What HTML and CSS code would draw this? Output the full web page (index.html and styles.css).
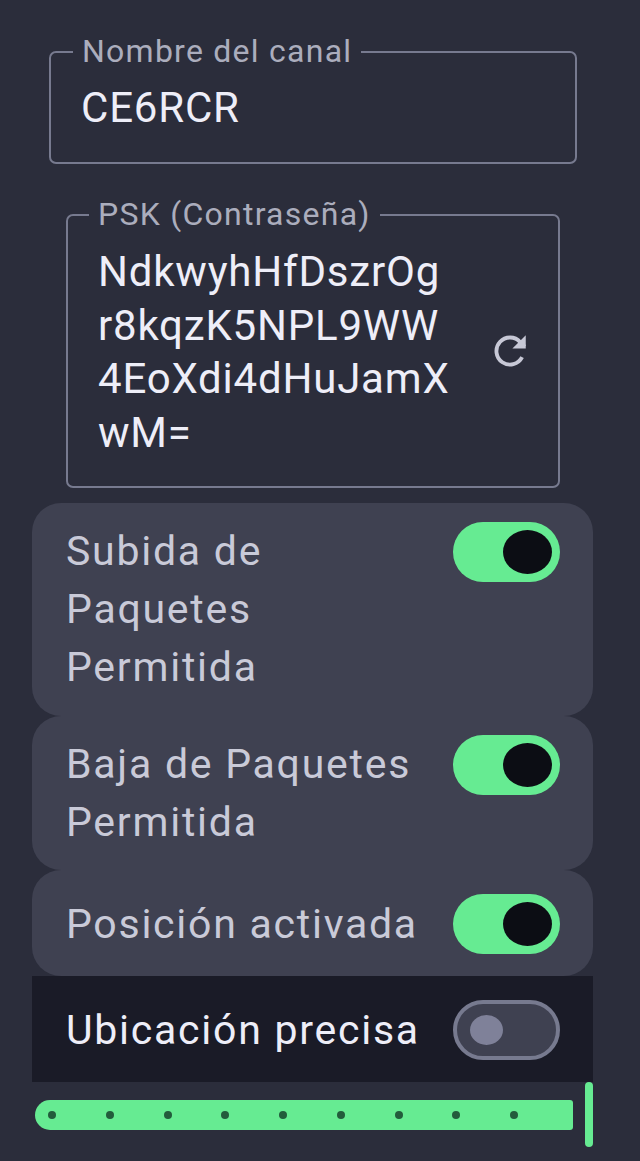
FILE: index.html
```html
<!DOCTYPE html>
<html lang="es">
<head>
    <meta charset="UTF-8">
    <meta name="viewport" content="width=device-width, initial-scale=1.0">
    <title>Canal</title>
    <link rel="stylesheet" href="styles.css">
</head>
<body>
    <div class="container">
        <fieldset class="field field-name">
            <legend>Nombre del canal</legend>
            <div class="field-value">CE6RCR</div>
        </fieldset>

        <fieldset class="field field-psk">
            <legend>PSK (Contraseña)</legend>
            <div class="psk-row">
                <div class="field-value psk-value">NdkwyhHfDszrOg<br>r8kqzK5NPL9WW<br>4EoXdi4dHuJamX<br>wM=</div>
                <svg class="refresh" viewBox="0 0 24 24" width="44" height="44" aria-hidden="true">
                    <path d="M18.6 15.4A7.4 7.4 0 1 1 17.6 7.2L20 9.6" fill="none" stroke="currentColor" stroke-width="2.1"/>
                    <path d="M20.6 3.4V10.7H13.3Z" fill="currentColor"/>
                </svg>
            </div>
        </fieldset>

        <div class="setting setting-three">
            <span class="setting-label">Subida de<br>Paquetes<br>Permitida</span>
            <span class="switch on"></span>
        </div>
        <div class="setting setting-two">
            <span class="setting-label">Baja de Paquetes<br>Permitida</span>
            <span class="switch on"></span>
        </div>
        <div class="setting setting-one">
            <span class="setting-label">Posición activada</span>
            <span class="switch on"></span>
        </div>
        <div class="setting setting-one selected">
            <span class="setting-label">Ubicación precisa</span>
            <span class="switch off"></span>
        </div>

        <div class="slider">
            <div class="slider-track">
                <i></i><i></i><i></i><i></i><i></i><i></i><i></i><i></i><i></i>
            </div>
            <div class="slider-thumb"></div>
        </div>
    </div>
</body>
</html>
```

FILE: styles.css
```css
* {
    box-sizing: border-box;
}
html, body {
    margin: 0;
    padding: 0;
}
body {
    width: 640px;
    height: 1161px;
    overflow: hidden;
    background-color: #2b2d3b;
    font-family: Roboto, "Noto Sans", sans-serif;
    color: #eeeef8;
}
.container {
    padding: 32px 47px 0 32px;
}
.field {
    margin: 0;
    padding: 0 22px 0 30px;
    border: 2px solid #777a8f;
    border-radius: 7px;
    min-width: 0;
}
.field legend {
    margin-left: -8px;
    padding: 0 9px 2px 9px;
    font-size: 32px;
    line-height: 38px;
    letter-spacing: 1.25px;
    color: #abadbd;
}
.field-name {
    margin: 0 16px 0 17px;
    height: 132px;
}
.field-psk {
    margin: 31px 33px 15px 34px;
    height: 293px;
}
.field-psk legend {
    margin-left: -9px;
}
.field-value {
    font-size: 42px;
    line-height: 54px;
    letter-spacing: 0.8px;
    padding-top: 9px;
}
.psk-row {
    display: flex;
    align-items: center;
    justify-content: space-between;
}
.psk-value {
    padding-top: 10px;
    line-height: 53.5px;
}
.refresh {
    color: #c7c8d6;
    margin-right: 4px;
    margin-top: 7px;
}
.setting {
    display: flex;
    justify-content: space-between;
    align-items: flex-start;
    padding: 19px 33px 0 34px;
    background-color: #3f4151;
    border-radius: 29px;
}
.setting-three {
    height: 213px;
}
.setting-two {
    height: 154px;
}
.setting-one {
    height: 106px;
    padding-top: 1px;
    align-items: center;
}
.setting-label {
    font-size: 41px;
    line-height: 58px;
    letter-spacing: 1.75px;
    color: #c9cad8;
}
.selected {
    background-color: #1a1b27;
    border-radius: 0;
}
.selected .setting-label {
    color: #eeeef8;
}
.switch {
    position: relative;
    flex: none;
    width: 107px;
    height: 60px;
    border-radius: 30px;
}
.switch::after {
    content: "";
    position: absolute;
    border-radius: 50%;
}
.switch.on {
    background-color: #66eb92;
}
.switch.on::after {
    top: 8px;
    left: 50px;
    width: 49px;
    height: 44px;
    background-color: #0c0d14;
}
.switch.off {
    background-color: #3f4151;
    border: 4px solid #777a8f;
}
.switch.off::after {
    top: 11px;
    left: 13px;
    width: 33px;
    height: 30px;
    background-color: #7f8199;
}
.slider {
    display: flex;
    align-items: center;
    justify-content: space-between;
    height: 65px;
    padding-left: 3px;
}
.slider-track {
    display: flex;
    align-items: center;
    gap: 49.75px;
    width: 538px;
    height: 30px;
    padding-left: 13px;
    background-color: #66eb92;
    border-radius: 15px 3px 3px 15px;
}
.slider-track i {
    flex: none;
    width: 8px;
    height: 8px;
    border-radius: 50%;
    background-color: #235c3c;
}
.slider-thumb {
    width: 8px;
    height: 65px;
    border-radius: 4px;
    background-color: #66eb92;
}
```
